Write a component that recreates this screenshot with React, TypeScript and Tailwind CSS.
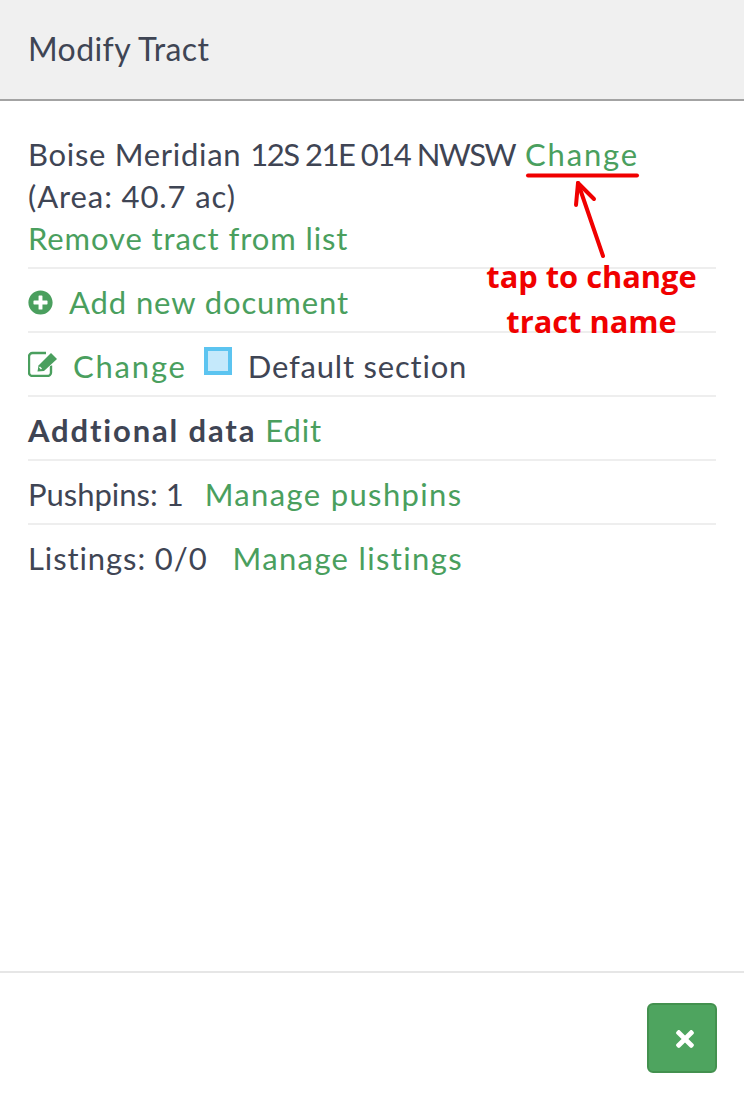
import { FaPlusCircle, FaTimes } from "react-icons/fa";

function EditIcon() {
  return (
    <svg width="30" height="26" viewBox="0 0 30 26" className="mb-[4px] text-[#4a9f5e]">
      <path
        d="M18 2H4.500a3.500 3.500 0 0 0-3.500 3.500v16a3.500 3.500 0 0 0 3.500 3.500h15a3.500 3.500 0 0 0 3.500-3.500v-7"
        fill="none"
        stroke="currentColor"
        strokeWidth="2.400"
      />
      <path
        d="M9.500 20.500L10.500 14.500L23 2L29 8L16 20Z"
        fill="currentColor"
        stroke="#fff"
        strokeWidth="1.200"
        paintOrder="stroke"
      />
      <path d="M11.500 16L13.500 18" stroke="#fff" strokeWidth="1.500" />
    </svg>
  );
}

export default function App() {
  return (
    <div className="relative flex h-[1099px] w-[744px] flex-col bg-white font-['Lato',sans-serif] text-[31px] leading-[42px] tracking-[0.9px] text-[#3f4554]">
      <div className="flex h-[101px] items-center border-b-2 border-[#a3a3a3] bg-[#f0f0f0] px-7 pb-[2px]">
        <h1 className="text-[32px] font-normal tracking-[0.4px]">Modify Tract</h1>
      </div>

      <div className="flex-1 px-7 pt-[32px]">
        <div className="border-b-2 border-[#eeeeee] pb-2">
          <div className="flex">
            <span className="whitespace-pre tracking-[0.7px]">Boise Meridian</span>
            <span className="ml-[9px] tracking-[-1.500px]">12S 21E 014 NWSW</span>
            <a className="ml-[10px] tracking-[1.800px] text-[#4a9f5e]">Change</a>
          </div>
          <div>(Area: 40.7 ac)</div>
          <a className="block text-[#4a9f5e]">Remove tract from list</a>
        </div>

        <div className="flex h-[64px] items-center gap-[16px] border-b-2 border-[#eeeeee] pt-[4px] text-[#4a9f5e]">
          <FaPlusCircle className="h-[25px] w-[25px]" />
          <span>Add new document</span>
        </div>

        <div className="flex h-[64px] items-center border-b-2 border-[#eeeeee] pt-[4px]">
          <EditIcon />
          <span className="ml-[15px] tracking-[1.800px] text-[#4a9f5e]">Change</span>
          <span className="mb-[11px] ml-[17px] h-[28px] w-[28px] border-[4px] border-[#5cc4f0] bg-[#c5e9fb]" />
          <span className="ml-[16px] tracking-[0.8px]">Default section</span>
        </div>

        <div className="flex h-[64px] items-center gap-[9px] border-b-2 border-[#eeeeee] pt-[4px]">
          <span className="font-bold tracking-[1.850px]">Addtional data</span>
          <a className="text-[#4a9f5e]">Edit</a>
        </div>

        <div className="flex h-[64px] items-center gap-[21px] border-b-2 border-[#eeeeee] pt-[4px]">
          <span className="tracking-[0px]">Pushpins: 1</span>
          <a className="tracking-[1.350px] text-[#4a9f5e]">Manage pushpins</a>
        </div>

        <div className="flex h-[64px] items-center gap-[25px] pt-[2px]">
          <span>Listings: 0/0</span>
          <a className="tracking-[1.350px] text-[#4a9f5e]">Manage listings</a>
        </div>
      </div>

      <div className="flex h-[128px] items-start justify-end border-t-2 border-[#e6e6e6] pt-[30px] pr-[27px]">
        <button className="flex h-[70px] w-[70px] items-center justify-center rounded-[6px] border-2 border-[#43914f] bg-[#4ea45f] pl-[5px] pt-[2px] text-white">
          <FaTimes className="h-[26px] w-[26px]" />
        </button>
      </div>

      {/* red annotation drawn over the screenshot */}
      <svg className="absolute left-0 top-0" width="744" height="300" fill="none" stroke="#f00000" strokeLinecap="round" strokeLinejoin="round">
        <path d="M528 175.500H637" strokeWidth="4" />
        <path d="M603 256L578 183" strokeWidth="4" />
        <path d="M576 205L578 183L594 199" strokeWidth="4" />
      </svg>
      <div className="absolute left-[470px] top-[254px] w-[243px] text-center font-['Open_Sans',sans-serif] text-[30.800px] font-bold leading-[45px] tracking-normal text-[#f00000]">
        <div>tap to change</div>
        <div>tract name</div>
      </div>
    </div>
  );
}
